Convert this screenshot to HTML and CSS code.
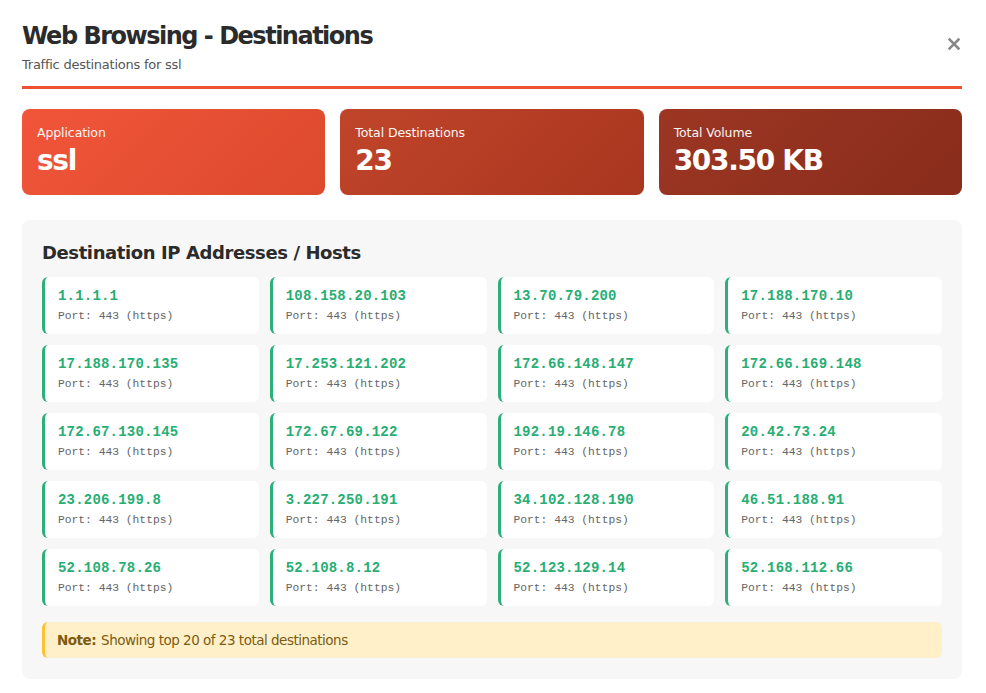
FILE: index.html
```html
<!DOCTYPE html>
<html>
<head>
<meta charset="utf-8">
<link rel="stylesheet" href="styles.css">
</head>
<body>
<div class="modal">
  <header class="head">
    <div>
      <h1 class="title">Web Browsing - Destinations</h1>
      <div class="subtitle">Traffic destinations for ssl</div>
    </div>
    <button class="close" aria-label="Close"><svg width="12" height="12" viewBox="0 0 12 12"><path d="M1.5 1.5 L10.5 10.5 M10.5 1.5 L1.5 10.5" stroke="#888" stroke-width="2.6" stroke-linecap="square"/></svg></button>
  </header>
  <div class="stats">
    <div class="stat s1"><div class="label">Application</div><div class="value">ssl</div></div>
    <div class="stat s2"><div class="label">Total Destinations</div><div class="value">23</div></div>
    <div class="stat s3"><div class="label">Total Volume</div><div class="value">303.50 KB</div></div>
  </div>
  <section class="panel">
    <h2 class="panel-title">Destination IP Addresses / Hosts</h2>
    <div class="grid">
      <div class="dest"><div class="ip">1.1.1.1</div><div class="port">Port: 443 (https)</div></div>
      <div class="dest"><div class="ip">108.158.20.103</div><div class="port">Port: 443 (https)</div></div>
      <div class="dest"><div class="ip">13.70.79.200</div><div class="port">Port: 443 (https)</div></div>
      <div class="dest"><div class="ip">17.188.170.10</div><div class="port">Port: 443 (https)</div></div>
      <div class="dest"><div class="ip">17.188.170.135</div><div class="port">Port: 443 (https)</div></div>
      <div class="dest"><div class="ip">17.253.121.202</div><div class="port">Port: 443 (https)</div></div>
      <div class="dest"><div class="ip">172.66.148.147</div><div class="port">Port: 443 (https)</div></div>
      <div class="dest"><div class="ip">172.66.169.148</div><div class="port">Port: 443 (https)</div></div>
      <div class="dest"><div class="ip">172.67.130.145</div><div class="port">Port: 443 (https)</div></div>
      <div class="dest"><div class="ip">172.67.69.122</div><div class="port">Port: 443 (https)</div></div>
      <div class="dest"><div class="ip">192.19.146.78</div><div class="port">Port: 443 (https)</div></div>
      <div class="dest"><div class="ip">20.42.73.24</div><div class="port">Port: 443 (https)</div></div>
      <div class="dest"><div class="ip">23.206.199.8</div><div class="port">Port: 443 (https)</div></div>
      <div class="dest"><div class="ip">3.227.250.191</div><div class="port">Port: 443 (https)</div></div>
      <div class="dest"><div class="ip">34.102.128.190</div><div class="port">Port: 443 (https)</div></div>
      <div class="dest"><div class="ip">46.51.188.91</div><div class="port">Port: 443 (https)</div></div>
      <div class="dest"><div class="ip">52.108.78.26</div><div class="port">Port: 443 (https)</div></div>
      <div class="dest"><div class="ip">52.108.8.12</div><div class="port">Port: 443 (https)</div></div>
      <div class="dest"><div class="ip">52.123.129.14</div><div class="port">Port: 443 (https)</div></div>
      <div class="dest"><div class="ip">52.168.112.66</div><div class="port">Port: 443 (https)</div></div>
    </div>
    <div class="note"><strong>Note:</strong> Showing top 20 of 23 total destinations</div>
  </section>
</div>
</body>
</html>
```
FILE: styles.css
```css
* { box-sizing: border-box; }
html, body { margin: 0; padding: 0; background: #fff; }
body { font-family: "DejaVu Sans", Verdana, sans-serif; color: #333; }
.modal { width: 986px; padding: 22px 24px 0 22px; }
.head {
  display: flex; justify-content: space-between; align-items: flex-start;
  border-bottom: 3px solid #f05032; padding-bottom: 12px; margin-bottom: 20px;
}
.title { margin: 0; font-size: 24px; font-weight: bold; color: #2b2b2b; line-height: 28px; letter-spacing: -1.5px; }
.subtitle { margin-top: 6px; font-size: 13px; color: #555; letter-spacing: -0.25px; line-height: 18px; }
.close {
  background: none; border: 0; padding: 0; margin: 16px 2px 0 0;
  width: 12px; height: 12px; display: block; cursor: pointer;
}
.close svg { display: block; }
.stats { display: grid; grid-template-columns: repeat(3, 1fr); gap: 15px; margin-bottom: 25px; }
.stat { height: 86px; border-radius: 8px; padding: 17px 15px; color: #fff; }
.s1 { background: linear-gradient(135deg, #f1553a 0%, #dc4a2d 100%); }
.s2 { background: linear-gradient(135deg, #c0452a 0%, #a9361f 100%); }
.s3 { background: linear-gradient(135deg, #9c3623 0%, #892c1b 100%); }
.label { font-size: 12.5px; line-height: 14px; opacity: 0.95; letter-spacing: -0.1px; }
.value { font-size: 28px; font-weight: bold; line-height: 34px; margin-top: 4px; letter-spacing: -1.3px; }
.panel { background: #f7f7f7; border-radius: 8px; padding: 20px 20px 21px 20px; }
.panel-title { margin: 2px 0 13px; font-size: 18px; font-weight: bold; color: #2b2b2b; line-height: 22px; letter-spacing: -0.4px; }
.grid { display: grid; grid-template-columns: repeat(4, 1fr); gap: 11px 11px; }
.dest {
  background: #fff; border-left: 3px solid #2bb07a; border-radius: 6px;
  padding: 11px 12px 10px 13px; height: 57px;
}
.ip { font-family: "Liberation Mono", "Courier New", monospace; font-weight: bold; font-size: 14px; color: #27ae74; line-height: 16px; letter-spacing: 0.2px; }
.port { font-family: "Liberation Mono", "Courier New", monospace; font-size: 11.3px; color: #666; margin-top: 6px; line-height: 13px; }
.note {
  margin-top: 16px; background: #fff0c9; border-left: 3px solid #ffc12f; border-radius: 6px;
  padding: 0 12px; height: 36px; display: flex; align-items: center; font-size: 13.5px; color: #7d5b10; letter-spacing: -0.5px;
}
.note strong { margin-right: 5px; }
```
